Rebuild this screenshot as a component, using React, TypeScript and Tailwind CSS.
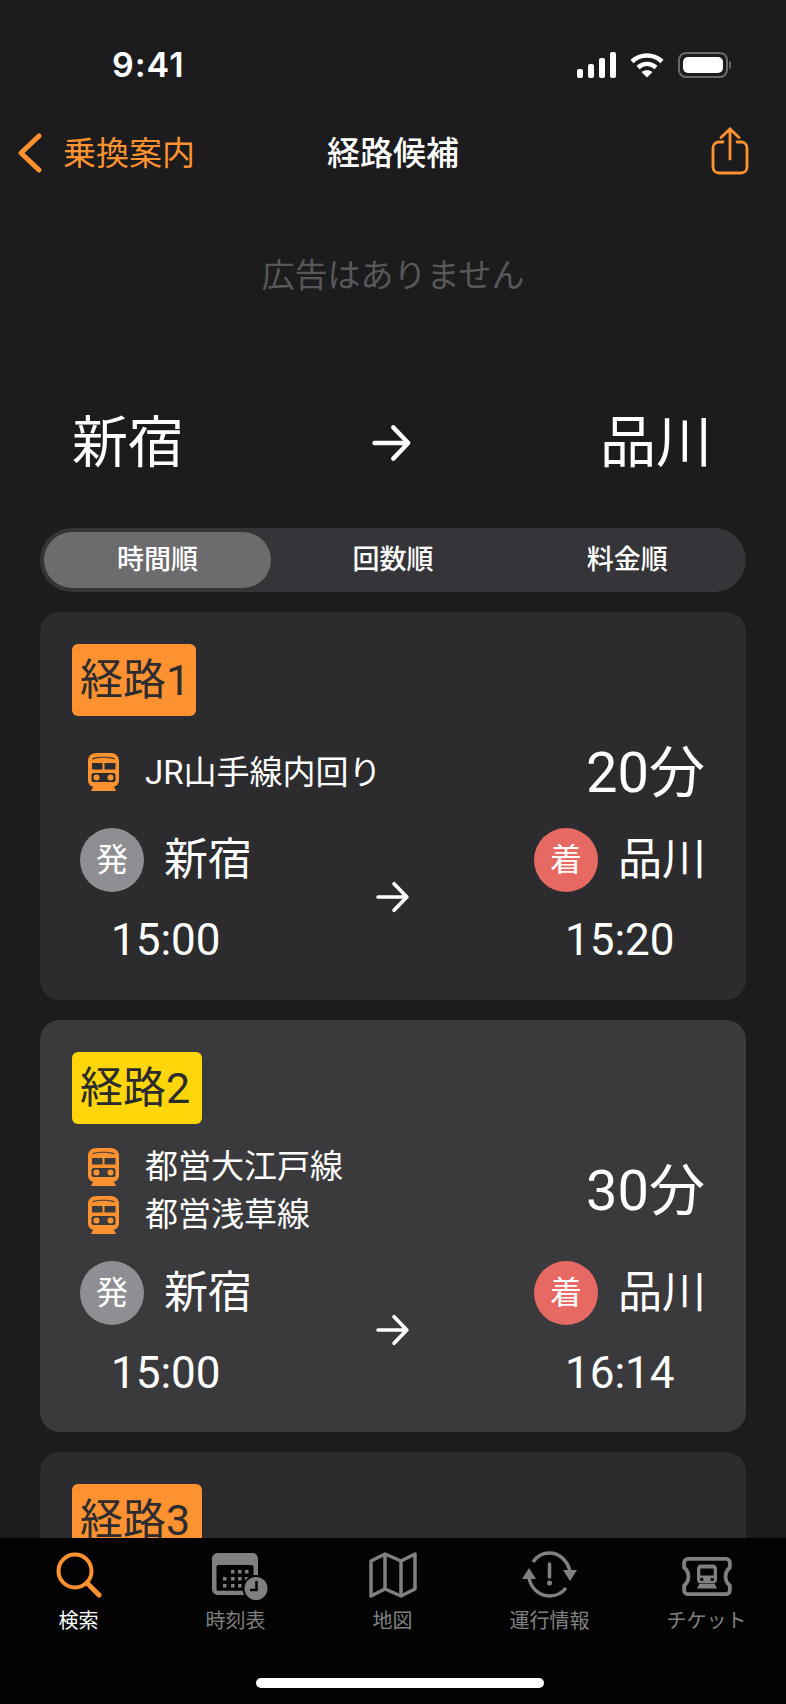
import React from 'react';

// --- Icons ---
function TrainIcon() {
  return (
    <svg width="33" height="38" viewBox="0 0 32 38" className="shrink-0">
      <path fillRule="evenodd" fill="#ff9230" d="M9 0h14c5 0 8.500 3 8.500 8v19c0 4-2.500 6-5.500 7H6c-3-1-5.500-3-5.500-7V8c0-5 3.500-8 8.500-8ZM4.500 10v6.500H15V10ZM17 10v6.500h11V10ZM5 6.500C11 4.300 21 4.300 27 6.500V5.300C21 3.300 11 3.300 5 5.300ZM6 20c-1 0-2 1-2 2v5c0 1 1 2 2 2h20c1 0 2-1 2-2v-5c0-1-1-2-2-2Z" />
      <circle cx="9" cy="24.500" r="3" fill="#ff9230" />
      <circle cx="23" cy="24.500" r="3" fill="#ff9230" />
      <path d="M6 33h20l2.500 5H3.500Z" fill="#ff9230" />
    </svg>
  );
}

function ArrowRight({ size, weight }: { size: number; weight: number }) {
  return (
    <svg width={size} height={size} viewBox="0 0 32 32" fill="none" stroke="#fff" strokeWidth={weight} strokeLinecap="round" strokeLinejoin="round">
      <path d="M2 16h27M17 3.500 29 16 17 28.500" />
    </svg>
  );
}

function StatusIcons() {
  return (
    <div className="flex items-center gap-[14px]">
      <svg width="39" height="26" viewBox="0 0 39 26" fill="#fff">
        <rect x="0" y="17" width="6" height="9" rx="2" />
        <rect x="11" y="12" width="6" height="14" rx="2" />
        <rect x="22" y="6" width="6" height="20" rx="2" />
        <rect x="33" y="0" width="6" height="26" rx="2" />
      </svg>
      <svg width="34" height="26" viewBox="0 0 34 26" fill="none" stroke="#fff" strokeWidth="4.500">
        <path d="M2 9.500C10.500 1.500 23.500 1.500 32 9.500" />
        <path d="M8 15.500c5.500-4.800 12.500-4.800 18 0" />
        <path d="M17 25.500 11.500 20c3.300-2.500 7.700-2.500 11 0Z" fill="#fff" stroke="none" />
      </svg>
      <div className="flex items-center gap-[1px]">
        <div className="w-[50px] h-[26px] rounded-[8px] border-2 border-[#6a6a6c] p-[3px]">
          <div className="w-full h-full rounded-[5px] bg-white" />
        </div>
        <div className="w-[2px] h-[8px] rounded-r-full bg-[#6a6a6c]" />
      </div>
    </div>
  );
}

function SearchIcon() {
  return (
    <svg width="46" height="46" viewBox="0 0 46 46" fill="none" stroke="#ff9230" strokeWidth="4" strokeLinecap="round">
      <circle cx="19" cy="19" r="16.500" />
      <path d="M31 31 43 43" strokeWidth="5" />
    </svg>
  );
}

function TimetableIcon() {
  const dots = [
    [19, 17], [26, 17], [33, 17], [11, 24], [19, 24], [26, 24], [33, 24], [11, 31], [19, 31], [26, 31],
  ];
  return (
    <svg width="56" height="48" viewBox="0 0 56 48" fill="none" className="ml-[9px] mt-[4px]">
      <path fill="#808080" fillRule="evenodd" d="M6 0h34c3.500 0 6 2.500 6 6v30c0 3.500-2.500 6-6 6H6c-3.500 0-6-2.500-6-6V6C0 2.500 2.500 0 6 0ZM4.500 14v22c0 1 .5 1.800 2 1.800h33c1.500 0 2-.8 2-1.800V14c0-1-.5-2-2-2h-33c-1.500 0-2 1-2 2Z" />
      {dots.map(([x, y]) => (
        <rect key={`${x}-${y}`} x={x} y={y} width="3.500" height="3.500" fill="#808080" />
      ))}
      <circle cx="44" cy="35.500" r="13.500" fill="#030303" />
      <circle cx="44" cy="35.500" r="11.500" fill="#808080" />
      <path d="M44.500 28v9h-6.500" stroke="#030303" strokeWidth="2.500" />
    </svg>
  );
}

function MapIcon() {
  return (
    <svg width="48" height="46" viewBox="0 0 48 46" fill="none" stroke="#808080" strokeWidth="3.500" strokeLinejoin="round">
      <path d="M2 9 16 2 32 9 46 2V37L32 44 16 37 2 44Z" />
      <path d="M16 2V37M32 9V44" />
    </svg>
  );
}

function ServiceIcon() {
  return (
    <svg width="56" height="48" viewBox="0 0 56 48" fill="none">
      <path d="M11 11C15 5 21 2 27.500 2 37 2 45 9 48 20" stroke="#808080" strokeWidth="3.500" />
      <path d="M7 27C9 37 17 45 27.500 45 34 45 40 42 44 37" stroke="#808080" strokeWidth="3.500" />
      <path d="M7 17 14 28H0Z M48 30 41 19H55Z" fill="#808080" />
      <path d="M27.500 13V26" stroke="#808080" strokeWidth="3.500" strokeLinecap="round" />
      <circle cx="27.500" cy="32" r="2.500" fill="#808080" />
    </svg>
  );
}

function TicketIcon() {
  return (
    <svg width="50" height="40" viewBox="0 0 52 42" fill="none" className="mt-[4px] ml-[1px]">
      <path d="M6 2h40c2 0 4 1.500 4 4v5c-3 2.500-4.500 6-4.500 9.500S47 27.500 50 30v5c0 2.500-2 4-4 4H6c-2 0-4-1.500-4-4v-5c3-2.500 4.500-6 4.500-9.500S5 13.500 2 11V6c0-2.500 2-4 4-4Z" stroke="#808080" strokeWidth="4" />
      <path fillRule="evenodd" fill="#808080" d="M20 8h12c3 0 4.500 2 4.500 4.500v11c0 2-1 3.500-3 4H18.500c-2-.5-3-2-3-4v-11C15.500 10 17 8 20 8ZM19 12v7.500h14V12Z" />
      <circle cx="20.500" cy="23.500" r="1.800" fill="#030303" />
      <circle cx="31.500" cy="23.500" r="1.800" fill="#030303" />
      <path d="M18 28h16l2.500 5H15.500Z" fill="#808080" />
    </svg>
  );
}

// --- Route card ---
function RouteBadge({ label, className }: any) {
  return (
    <div className={`h-[72px] pl-[8px] rounded-[6px] flex items-center text-[43px] text-[#2c2c2e] ${className}`}>{label}</div>
  );
}

function StationColumn({ mark, markColor, station, time }: any) {
  return (
    <div className="flex flex-col">
      <div className="flex items-center gap-[20px]">
        <div className={`w-[64px] h-[64px] rounded-full flex items-center justify-center text-[32px] text-white ${markColor}`}>{mark}</div>
        <span className="text-[44px] leading-[64px] text-white">{station}</span>
      </div>
      <div className="mt-[20px] pl-[31px] text-[44px] leading-[56px] text-white">{time}</div>
    </div>
  );
}

function RouteCard({ label, badge, lines, minutes, cardClass, arrival, rowClass }: any) {
  return (
    <div className={`rounded-[20px] pt-[32px] pl-[32px] pr-[40px] ${cardClass}`}>
      <RouteBadge label={label} className={badge} />
      <div className={`flex items-center justify-between ${rowClass}`}>
        <div className="flex flex-col gap-[8px] pl-[15px] mt-[-2px]">
          {lines.map((line: string) => (
            <div key={line} className="flex items-center gap-[25px] h-[40px]">
              <TrainIcon />
              <span className="text-[33px] text-white leading-none">{line}</span>
            </div>
          ))}
        </div>
        <span className="text-[56px] leading-none text-white mr-[1px] mt-[-1px]">{minutes}</span>
      </div>
      <div className="flex justify-between pl-[8px]">
        <StationColumn mark="発" markColor="bg-[#8e8e93]" station="新宿" time="15:00" />
        <div className="self-center mt-[-2px]">
          <ArrowRight size={34} weight={3.500} />
        </div>
        <StationColumn mark="着" markColor="bg-[#e66a63]" station="品川" time={arrival} />
      </div>
    </div>
  );
}

function TabItem({ icon, label, active }: any) {
  return (
    <div className="w-[157px] flex flex-col items-center">
      <div className="h-[50px] flex items-center justify-center">{icon}</div>
      <span className={`mt-[7px] text-[20px] leading-[28px] ${active ? 'text-white' : 'text-[#808080]'}`}>{label}</span>
    </div>
  );
}

export default function App() {
  return (
    <div
      className="relative w-[786px] h-[1704px] overflow-hidden bg-[#1c1c1e]"
      style={{ fontFamily: 'Roboto, "Noto Sans CJK JP", sans-serif' }}
    >
      {/* Status bar */}
      <div className="h-[128px] flex items-center justify-between pl-[112px] pr-[55px] pt-[1px]">
        <span className="text-[34px] font-semibold text-white tracking-[1px]" style={{ fontFamily: 'Inter, sans-serif' }}>9:41</span>
        <StatusIcons />
      </div>

      {/* Nav bar */}
      <div className="relative h-[50px] flex items-center justify-between pl-[18px] pr-[37px]">
        <div className="flex items-center gap-[21px] text-[#ff9230]">
          <svg width="24" height="40" viewBox="0 0 24 40" fill="none" stroke="#ff9230" strokeWidth="5" strokeLinecap="round" strokeLinejoin="round">
            <path d="M21 3 3 20l18 17" />
          </svg>
          <span className="text-[33px] leading-none">乗換案内</span>
        </div>
        <span className="absolute left-[327px] text-[33px] leading-none font-medium text-white">経路候補</span>
        <svg width="38" height="48" viewBox="0 0 38 48" fill="none" stroke="#ff9230" strokeWidth="2.800" strokeLinecap="round" className="mt-[-4px]">
          <path d="M19 32V2M10 10.500 19 2l9 8.500" />
          <path d="M12 15H8c-3.500 0-6 2.500-6 6v19c0 3.500 2.500 6 6 6h22c3.500 0 6-2.500 6-6V21c0-3.500-2.500-6-6-6h-4" />
        </svg>
      </div>

      {/* Ad */}
      <div className="mt-[76px] text-center text-[33px] leading-[44px] text-[#58585a]">広告はありません</div>

      {/* From / to */}
      <div className="mt-[114px] flex items-center justify-between pl-[72px] pr-[74px] h-[62px]">
        <span className="text-[56px] leading-none text-white">新宿</span>
        <ArrowRight size={40} weight={3.500} />
        <span className="text-[56px] leading-none text-white">品川</span>
      </div>

      {/* Sort tabs */}
      <div className="mx-[40px] mt-[54px] h-[64px] rounded-full bg-[#353539] p-[4px] grid grid-cols-3 text-[27px] text-white font-medium">
        <div className="rounded-full bg-[#6c6c6e] w-[227px] flex items-center justify-center">時間順</div>
        <div className="flex items-center justify-center">回数順</div>
        <div className="flex items-center justify-center pl-[3px]">料金順</div>
      </div>

      {/* Route list */}
      <div className="mx-[40px] mt-[20px] flex flex-col gap-[20px]">
        <RouteCard
          label="経路1"
          badge="w-[124px] bg-[#ff9230]"
          lines={['JR山手線内回り']}
          minutes="20分"
          arrival="15:20"
          cardClass="bg-[#2c2c2e] pb-[32px]"
          rowClass="mt-[25px] mb-[23px] h-[64px]"
        />
        <RouteCard
          label="経路2"
          badge="w-[130px] bg-[#ffd60a]"
          lines={['都営大江戸線', '都営浅草線']}
          minutes="30分"
          arrival="16:14"
          cardClass="bg-[#3a3a3c] pb-[31px]"
          rowClass="mt-[19px] mb-[21px] h-[97px]"
        />
        <div className="h-[200px] rounded-[20px] pt-[32px] pl-[32px] bg-[#2c2c2e]">
          <RouteBadge label="経路3" className="w-[130px] bg-[#ff9230]" />
        </div>
      </div>

      {/* Tab bar */}
      <div className="absolute left-0 right-0 bottom-0 h-[166px] bg-[#030303]">
        <div className="flex pt-[12px]">
          <TabItem icon={<SearchIcon />} label="検索" active />
          <TabItem icon={<TimetableIcon />} label="時刻表" />
          <TabItem icon={<MapIcon />} label="地図" />
          <TabItem icon={<ServiceIcon />} label="運行情報" />
          <TabItem icon={<TicketIcon />} label="チケット" />
        </div>
        <div className="absolute left-[256px] bottom-[16px] w-[288px] h-[10px] rounded-full bg-white" />
      </div>
    </div>
  );
}
